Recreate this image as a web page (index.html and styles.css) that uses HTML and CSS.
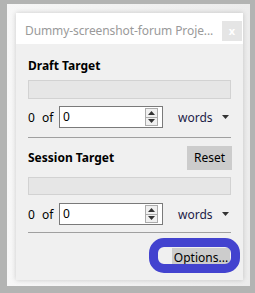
FILE: index.html
```html
<!DOCTYPE html>
<html>
<head>
<meta charset="utf-8">
<link rel="stylesheet" href="styles.css">
</head>
<body>
<div class="frame">
  <div class="window">
    <div class="titlebar">
      <span class="title">Dummy-screenshot-forum Proje...</span>
      <span class="close">x</span>
    </div>
    <div class="content">
      <div class="heading">Draft Target</div>
      <div class="bar"></div>
      <div class="row">
        <span class="num">0</span>
        <span class="of">of</span>
        <div class="spin">
          <span class="val">0</span>
          <div class="spinbtns">
            <div class="sb"><svg width="7" height="4" viewBox="0 0 7 4"><path d="M0 4h7L3.5 0z" fill="#333"/></svg></div>
            <div class="sb"><svg width="7" height="4" viewBox="0 0 7 4"><path d="M0 0h7L3.5 4z" fill="#333"/></svg></div>
          </div>
        </div>
        <div class="combo">
          <span class="words">words</span>
          <svg class="arrow" width="7" height="4" viewBox="0 0 7 4"><path d="M0 0h7L3.5 4z" fill="#333"/></svg>
        </div>
      </div>
      <div class="sep sep1"></div>
      <div class="heading2">
        <span class="hd">Session Target</span>
        <span class="btn reset">Reset</span>
      </div>
      <div class="bar bar2"></div>
      <div class="row row2">
        <span class="num">0</span>
        <span class="of">of</span>
        <div class="spin">
          <span class="val">0</span>
          <div class="spinbtns">
            <div class="sb"><svg width="7" height="4" viewBox="0 0 7 4"><path d="M0 4h7L3.5 0z" fill="#333"/></svg></div>
            <div class="sb"><svg width="7" height="4" viewBox="0 0 7 4"><path d="M0 0h7L3.5 4z" fill="#333"/></svg></div>
          </div>
        </div>
        <div class="combo">
          <span class="words">words</span>
          <svg class="arrow" width="7" height="4" viewBox="0 0 7 4"><path d="M0 0h7L3.5 4z" fill="#333"/></svg>
        </div>
      </div>
      <div class="sep sep2"></div>
      <div class="footer">
        <span class="btn options">Options...</span>
        <span class="ring"></span>
      </div>
    </div>
  </div>
</div>
</body>
</html>
```
FILE: styles.css
```css
html, body {
  margin: 0;
  padding: 0;
}
body {
  background: #b3b4b3;
  width: 255px;
  height: 293px;
  overflow: hidden;
  padding: 4px 0 0 7px;
  box-sizing: border-box;
  font-family: "Noto Sans", "Open Sans", sans-serif;
  font-size: 12px;
  color: #000;
}
.frame {
  width: 243px;
  height: 282px;
  background: linear-gradient(to right, #f7f7f7, #ececec);
  padding: 9px 7px 6px 9px;
  box-sizing: border-box;
}
.window {
  width: 227px;
  height: 267px;
  background: #f0f0f0;
  box-shadow: 0 0 5px rgba(0,0,0,0.18);
}
.titlebar {
  height: 31px;
  background: #fff;
  display: flex;
  align-items: flex-start;
  padding: 8px 1px 0 9px;
  box-sizing: border-box;
}
.title {
  color: #9a9a9a;
  font-size: 12px;
  line-height: 16px;
  margin-top: 2px;
  white-space: nowrap;
  letter-spacing: -0.1px;
}
.close {
  margin-left: auto;
  width: 20px;
  height: 20px;
  background: #e5e5e5;
  color: #fff;
  font-size: 11px;
  font-weight: bold;
  line-height: 19px;
  text-align: center;
}
.content {
  padding: 0 12px;
}
.heading {
  font-weight: bold;
  line-height: 16px;
  padding-top: 14px;
  height: 16px;
}
.bar {
  margin-top: 6px;
  height: 19px;
  border: 1px solid #d2d2d2;
  background: #e6e6e6;
  box-sizing: border-box;
}
.bar2 {
  margin-top: 7px;
  height: 18px;
}
.row {
  display: flex;
  align-items: center;
  margin-top: 7px;
  height: 22px;
}
.row2 {
  margin-top: 8px;
}
.num {
  width: 14px;
}
.of {
  width: 17px;
}
.spin {
  width: 104px;
  height: 22px;
  border: 1px solid #7a7a7a;
  background: #fff;
  box-sizing: border-box;
  display: flex;
  align-items: center;
  padding: 0 4px 0 3px;
}
.val {
  flex: 1;
  line-height: 16px;
}
.spinbtns {
  width: 13px;
  height: 18px;
  border: 1px solid #acacac;
  box-sizing: border-box;
  display: flex;
  flex-direction: column;
  background: #f0f0f0;
}
.sb {
  flex: 1;
  display: flex;
  align-items: center;
  justify-content: center;
}
.sb + .sb {
  border-top: 1px solid #acacac;
}
.combo {
  display: flex;
  align-items: center;
  margin-left: 15px;
  flex: 1;
}
.words {
  color: #1c1c48;
}
.arrow {
  margin-left: auto;
  margin-right: 2px;
}
.sep {
  height: 1px;
  background: #a0a0a0;
}
.sep1 {
  margin-top: 9px;
}
.sep2 {
  margin-top: 7px;
}
.heading2 {
  display: flex;
  align-items: center;
  margin-top: 8px;
  height: 24px;
}
.hd {
  font-weight: bold;
  line-height: 16px;
}
.btn {
  background: #cccccc;
  line-height: 16px;
  text-align: center;
}
.reset {
  margin-left: auto;
  margin-right: -1px;
  width: 45px;
  height: 24px;
  line-height: 24px;
}
.footer {
  position: relative;
  display: flex;
  justify-content: flex-end;
  margin-top: 15px;
}
.options {
  width: 58px;
  height: 20px;
  line-height: 20px;
  margin-right: 1px;
}
.ring {
  position: absolute;
  left: 121px;
  top: -10px;
  width: 91px;
  height: 35px;
  border: 9px solid #4343cf;
  border-radius: 15px;
  box-sizing: border-box;
}
```
